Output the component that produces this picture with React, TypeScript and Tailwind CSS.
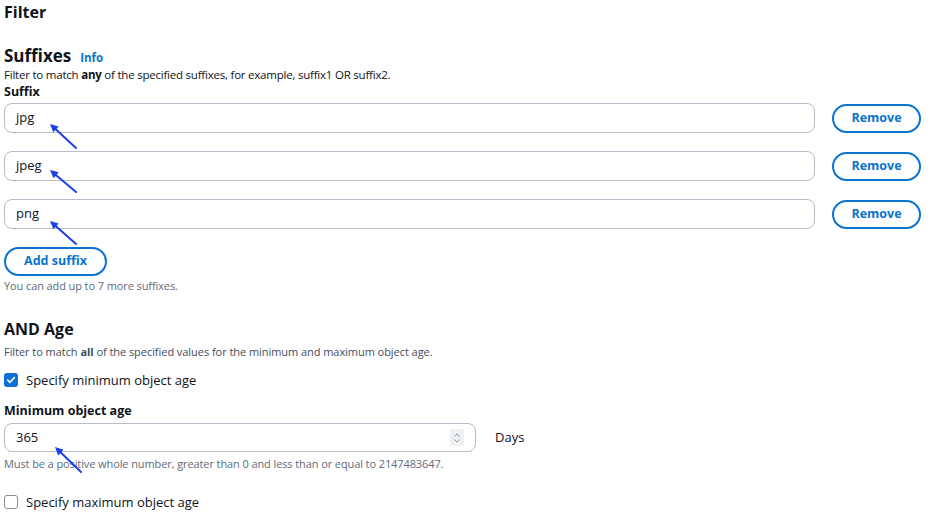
import React from "react";

const font = { fontFamily: '"Open Sans", "Noto Sans", Arial, sans-serif' };

function Arrow({ x1, y1, x2, y2 }: { x1: number; y1: number; x2: number; y2: number }) {
  // annotation arrow, head at (x2, y2)
  const ang = Math.atan2(y2 - y1, x2 - x1);
  const len = 9;
  const spread = 0.45;
  const ax = x2 - len * Math.cos(ang - spread);
  const ay = y2 - len * Math.sin(ang - spread);
  const bx = x2 - len * Math.cos(ang + spread);
  const by = y2 - len * Math.sin(ang + spread);
  return (
    <g>
      <line x1={x1} y1={y1} x2={x2 + 3 * Math.cos(ang + Math.PI)} y2={y2 + 3 * Math.sin(ang + Math.PI)} stroke="#1d3fe6" strokeWidth="2" strokeLinecap="round" />
      <polygon points={`${x2},${y2} ${ax},${ay} ${bx},${by}`} fill="#1d3fe6" />
    </g>
  );
}

function SuffixRow({ value }: { value: string }) {
  return (
    <div className="flex items-center gap-[17px]">
      <div className="flex h-[30px] flex-1 items-center rounded-lg border border-[#b6bec9] px-[11px] text-[13px] text-[#0f141a]">
        {value}
      </div>
      <button className="h-[29px] w-[89px] rounded-full border-2 border-[#0972d3] text-[12.5px] font-bold text-[#0972d3]">
        Remove
      </button>
    </div>
  );
}

export default function App() {
  return (
    <div className="relative h-[514px] w-[936px] overflow-hidden bg-white px-[4px] text-[#0f141a]" style={font}>
      <h1 className="pt-[2px] text-[16px] font-bold leading-[20px]">Filter</h1>

      <div className="mt-[23px] flex items-baseline gap-[9px]">
        <h2 className="text-[17px] font-bold leading-[22px]">Suffixes</h2>
        <span className="text-[11.5px] font-bold text-[#0972d3]">Info</span>
      </div>
      <p className="text-[11.5px] leading-[16px] tracking-[-0.22px]">
        Filter to match <b>any</b> of the specified suffixes, for example, suffix1 OR suffix2.
      </p>
      <div className="text-[12.5px] font-bold leading-[18px]">Suffix</div>

      <div className="mt-[2px] flex w-[917px] flex-col gap-[18px]">
        <SuffixRow value="jpg" />
        <SuffixRow value="jpeg" />
        <SuffixRow value="png" />
      </div>

      <button className="mt-[18px] h-[29px] w-[103px] rounded-full border-2 border-[#0972d3] text-[12.5px] font-bold text-[#0972d3]">
        Add suffix
      </button>
      <p className="mt-[2px] text-[11px] leading-[16px] tracking-[-0.1px] text-[#5f6b7a]">You can add up to 7 more suffixes.</p>

      <h2 className="mt-[24px] text-[16px] font-bold leading-[22px]">AND Age</h2>
      <p className="mt-[4px] text-[11px] leading-[16px] tracking-[-0.05px] text-[#414d5c]">
        Filter to match <b>all</b> of the specified values for the minimum and maximum object age.
      </p>

      <label className="mt-[11px] flex items-center gap-[8px] text-[13px] leading-[18px]">
        <span className="flex h-[14px] w-[14px] items-center justify-center rounded-[3px] bg-[#0972d3]">
          <svg width="10" height="10" viewBox="0 0 10 10">
            <path d="M1.8 5.2 L4 7.3 L8.3 2.6" fill="none" stroke="white" strokeWidth="1.7" strokeLinecap="round" strokeLinejoin="round" />
          </svg>
        </span>
        Specify minimum object age
      </label>

      <div className="mt-[13px] text-[12.5px] font-bold leading-[18px]">Minimum object age</div>
      <div className="mt-[3px] flex items-center">
        <div className="flex h-[29px] w-[472px] items-center justify-between rounded-lg border border-[#b6bec9] pl-[11px] pr-[11px] text-[13px]">
          <span>365</span>
          <span className="flex h-[17px] w-[14px] items-center justify-center bg-[#eef0f2]">
            <svg width="8" height="12" viewBox="0 0 8 12">
              <path d="M1.5 4.5 L4 2 L6.5 4.5 M1.5 7.5 L4 10 L6.5 7.5" fill="none" stroke="#8d99a8" strokeWidth="1" />
            </svg>
          </span>
        </div>
        <span className="ml-[19px] text-[13px]">Days</span>
      </div>
      <p className="mt-[4px] text-[11px] leading-[16px] tracking-[-0.1px] text-[#5f6b7a]">
        Must be a positive whole number, greater than 0 and less than or equal to 2147483647.
      </p>

      <label className="mt-[21px] flex items-center gap-[8px] text-[13px] leading-[18px]">
        <span className="h-[14px] w-[14px] rounded-[3px] border border-[#8c8c94] bg-white" />
        Specify maximum object age
      </label>

      <svg className="pointer-events-none absolute left-0 top-0" width="936" height="514">
        <Arrow x1={76} y1={148} x2={50} y2={124} />
        <Arrow x1={76} y1={192} x2={50} y2={170} />
        <Arrow x1={76} y1={244} x2={50} y2={221} />
        <Arrow x1={81} y1={472} x2={55} y2={447} />
      </svg>
    </div>
  );
}
